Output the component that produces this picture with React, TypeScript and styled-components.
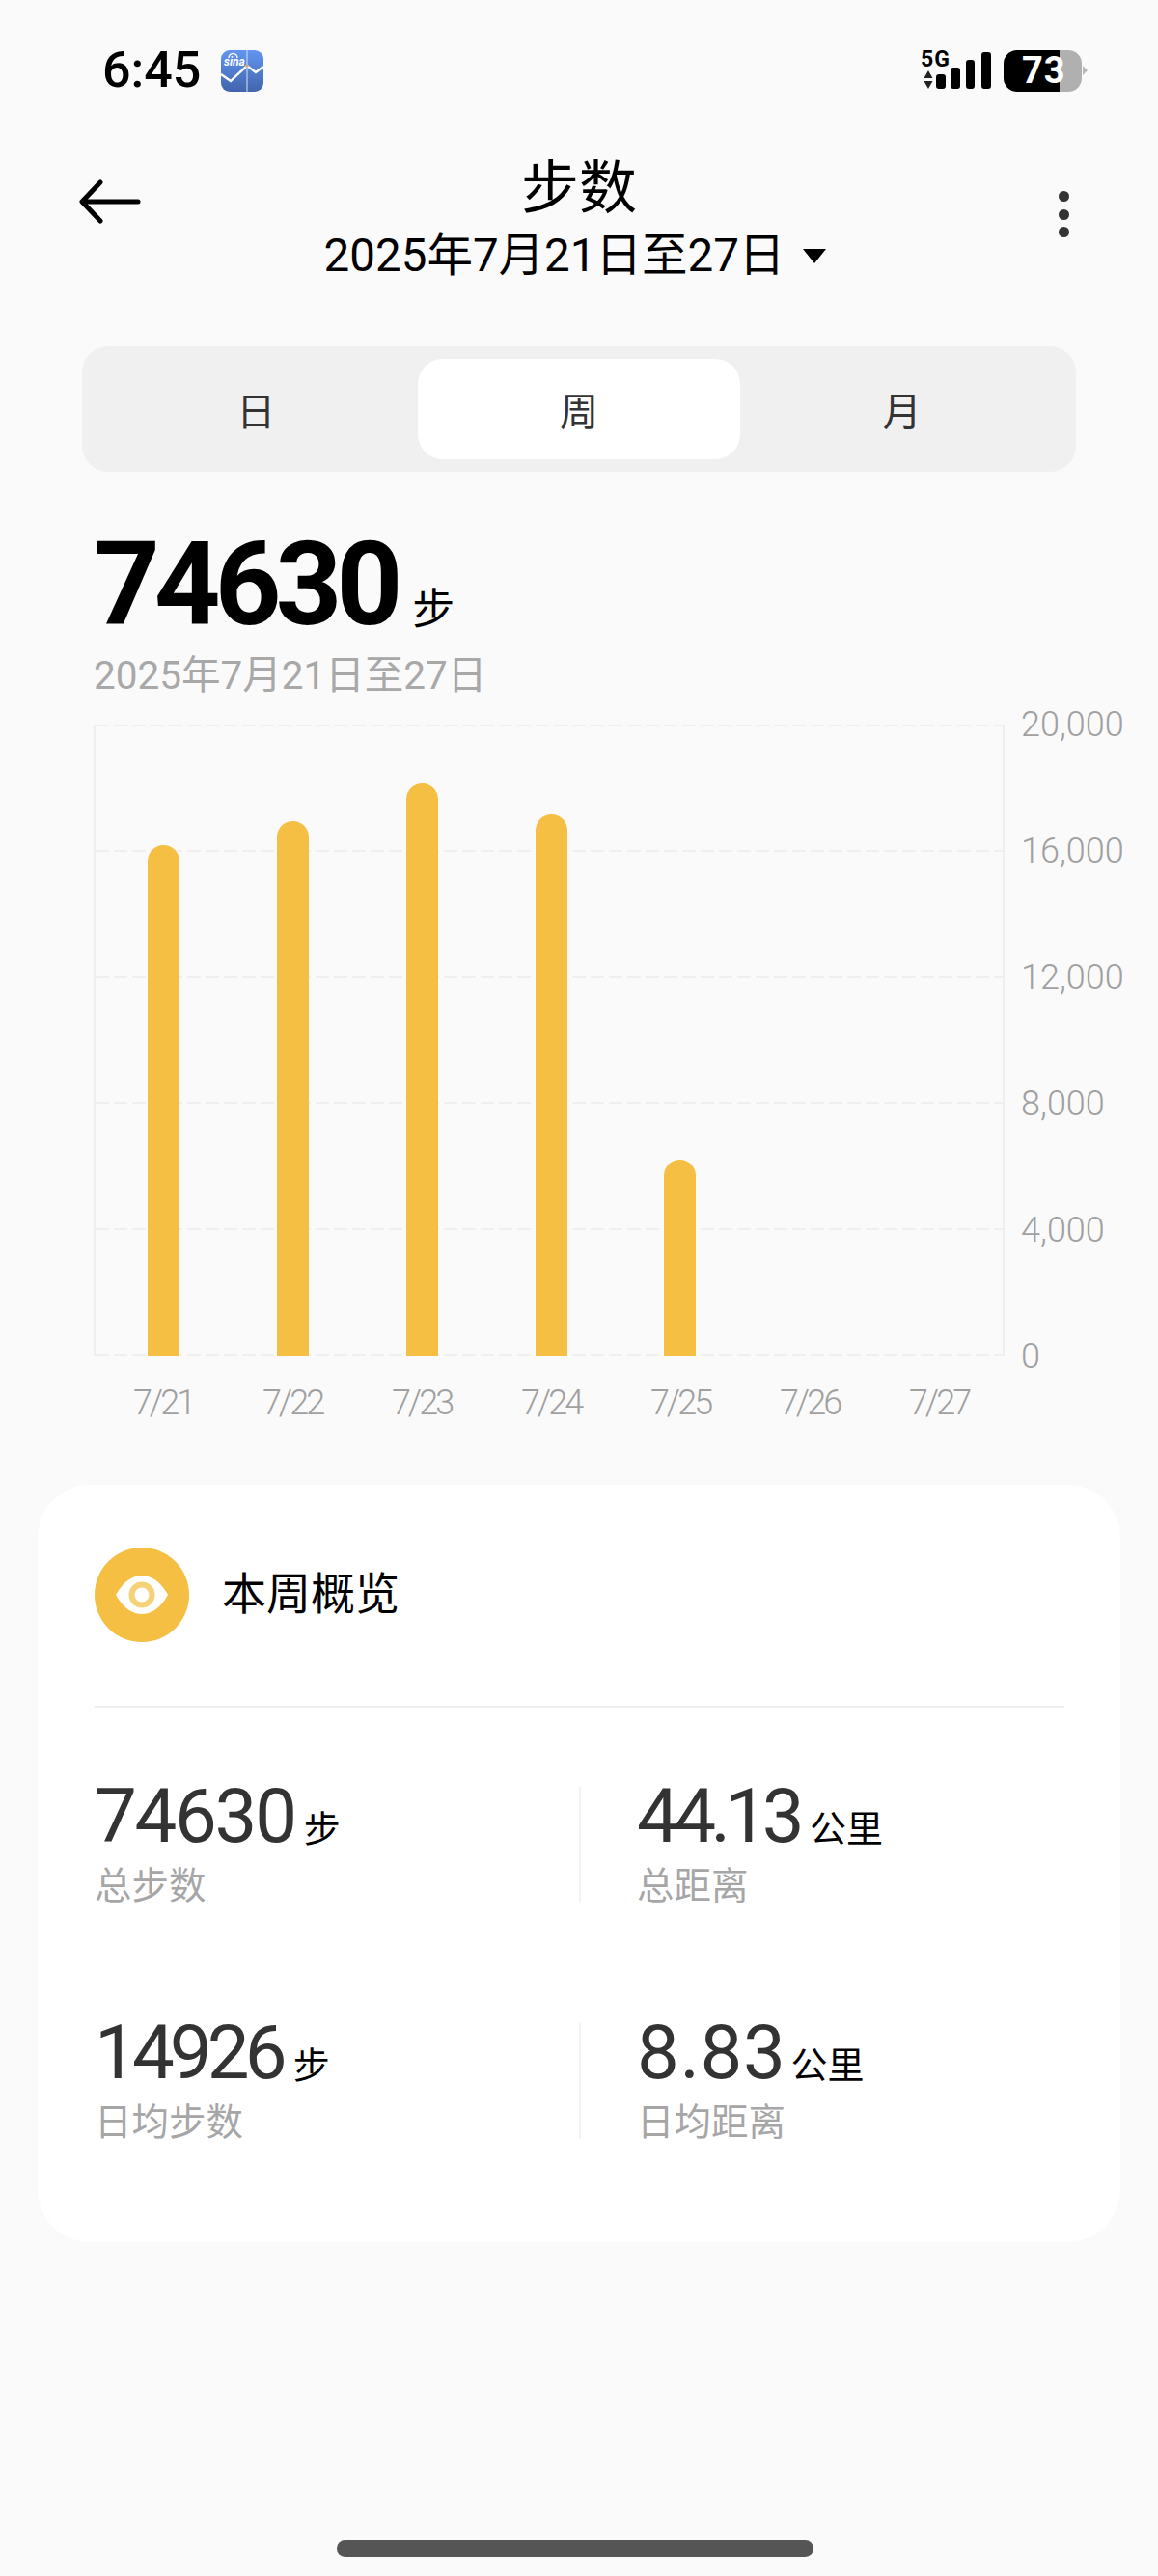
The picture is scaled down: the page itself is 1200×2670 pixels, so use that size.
import React from "react";
import styled, { createGlobalStyle } from "styled-components";

const FONT = `Roboto, "Noto Sans CJK SC", sans-serif`;
const YELLOW = "#f4bf42";
const BAR_MAX = 20000;
const PLOT_HEIGHT = 654;

const GlobalStyle = createGlobalStyle`
  html, body { margin: 0; padding: 0; background: #fafafa; }
  * { box-sizing: border-box; }
`;

const Page = styled.div`
  width: 1200px;
  height: 2670px;
  background: #fafafa;
  font-family: ${FONT};
  display: flex;
  flex-direction: column;
  overflow: hidden;
`;

const StatusBar = styled.div`
  height: 146px;
  padding: 51px 73px 0 106px;
  display: flex;
  align-items: flex-start;
  justify-content: space-between;
`;

const StatusLeft = styled.div`
  display: flex;
  align-items: center;
  gap: 21px;
  height: 44px;
`;

const Time = styled.span`
  font-size: 52px;
  font-weight: 500;
  color: #000;
  line-height: 44px;
`;

const StatusRight = styled.div`
  display: flex;
  align-items: flex-start;
  height: 44px;
`;

const NetColumn = styled.div`
  width: 16px;
  display: flex;
  flex-direction: column;
  align-items: flex-start;
  margin-top: 2px;

  svg {
    margin: 2px 0 0 3px;
  }
`;

const FiveG = styled.span`
  font-size: 23px;
  font-weight: 700;
  line-height: 18px;
  color: #000;
  letter-spacing: 1px;
`;

const SignalSlot = styled.div`
  margin-top: 3px;
  height: 38px;
`;

const Battery = styled.div`
  width: 81px;
  height: 43px;
  margin: 1px 0 0 12px;
  border-radius: 14px;
  background: linear-gradient(to right, #000 0 58px, #b0b0b0 58px);
  color: #fff;
  font-size: 38px;
  font-weight: 700;
  line-height: 43px;
  padding-left: 19px;
  letter-spacing: 1px;
`;

const BatteryNub = styled.div`
  width: 0;
  height: 0;
  margin: 17px 0 0 1px;
  border-left: 5px solid #b8b8b8;
  border-top: 5px solid transparent;
  border-bottom: 5px solid transparent;
`;

const Header = styled.div`
  height: 213px;
  padding: 0 85px;
  display: grid;
  grid-template-columns: 1fr auto 1fr;
`;

const BackCell = styled.div`
  padding-top: 40px;
  margin-left: -4px;
`;

const TitleBlock = styled.div`
  display: flex;
  flex-direction: column;
  align-items: center;
`;

const Title = styled.div`
  font-size: 60px;
  line-height: 70px;
  color: #000;
  margin-top: 15px;
`;

const DateRow = styled.div`
  display: flex;
  align-items: center;
  gap: 19px;
  font-size: 47.5px;
  line-height: 62px;
  color: #000;
  margin-top: 3px;
  margin-left: -8px;
`;

const Caret = styled.span`
  width: 0;
  height: 0;
  border-left: 12px solid transparent;
  border-right: 12px solid transparent;
  border-top: 15px solid #000;
`;

const MoreCell = styled.div`
  display: flex;
  flex-direction: column;
  align-items: flex-end;
  gap: 7.5px;
  padding: 52px 7px 0 0;
`;

const Dot = styled.span`
  width: 11px;
  height: 11px;
  border-radius: 50%;
  background: #333;
`;

const Tabs = styled.div`
  margin: 0 85px;
  height: 130px;
  padding: 13px;
  border-radius: 27px;
  background: #f0f0f0;
  display: grid;
  grid-template-columns: repeat(3, 1fr);
`;

const Tab = styled.div<{ $active?: boolean }>`
  border-radius: 26px;
  background: ${(p) => (p.$active ? "#fff" : "transparent")};
  color: #333;
  font-size: 40px;
  display: flex;
  align-items: center;
  justify-content: center;
`;

const Total = styled.div`
  margin: 62px 0 0 97px;
  display: flex;
  align-items: baseline;
  height: 110px;
`;

const TotalNumber = styled.span`
  font-size: 120px;
  font-weight: 700;
  line-height: 110px;
  color: #000;
  letter-spacing: -6px;
`;

const TotalUnit = styled.span`
  font-size: 44px;
  color: #000;
  margin-left: 16px;
`;

const RangeText = styled.div`
  margin: 14px 0 0 97px;
  font-size: 40.5px;
  line-height: 50px;
  color: #a8a8a8;
`;

const ChartWrap = styled.div`
  margin: 26px 0 0 97px;
  display: grid;
  grid-template-columns: 944px auto;
  column-gap: 17px;
`;

const Plot = styled.div`
  position: relative;
  height: ${PLOT_HEIGHT}px;
  border-left: 2px solid #efefef;
  border-right: 2px solid #efefef;
`;

const GridLines = styled.div`
  position: absolute;
  inset: 0;
  display: flex;
  flex-direction: column;
  justify-content: space-between;
`;

const GridLine = styled.div`
  height: 2px;
  background: repeating-linear-gradient(to right, #efefef 0 14px, transparent 14px 19px);
`;

const Bars = styled.div`
  position: absolute;
  inset: 0;
  padding-left: 4px;
  display: flex;
  align-items: flex-end;
`;

const BarSlot = styled.div`
  width: 134.4px;
  display: flex;
  justify-content: center;
`;

const Bar = styled.div`
  width: 33px;
  background: ${YELLOW};
  border-radius: 16.5px 16.5px 0 0;
`;

const YAxis = styled.div`
  height: 661px;
  margin-top: -3px;
  display: flex;
  flex-direction: column;
  justify-content: space-between;
`;

const AxisText = styled.span`
  font-size: 36px;
  font-weight: 300;
  line-height: 6px;
  color: #a0a0a0;
`;

const XAxis = styled.div`
  margin: 30px 0 0 102px;
  display: flex;
`;

const XLabel = styled.div`
  width: 134px;
  text-align: center;
  font-size: 36px;
  font-weight: 300;
  line-height: 30px;
  color: #a0a0a0;
  letter-spacing: -3px;
`;

const Card = styled.div`
  margin: 70px 39px 0;
  height: 785px;
  padding: 65px 58px 0 59px;
  border-radius: 55px;
  background: #fff;
`;

const CardHead = styled.div`
  display: flex;
  align-items: center;
  gap: 34px;
  height: 98px;
`;

const EyeBadge = styled.div`
  width: 98px;
  height: 98px;
  border-radius: 50%;
  background: ${YELLOW};
  display: flex;
  align-items: center;
  justify-content: center;
`;

const CardTitle = styled.div`
  font-size: 46px;
  line-height: 60px;
  margin-top: -2px;
  color: #000;
`;

const Rule = styled.div`
  height: 2px;
  margin-top: 66px;
  background: #eeeeee;
`;

const StatGrid = styled.div`
  margin-top: 82px;
  display: grid;
  grid-template-columns: 502px 1fr;
  row-gap: 125px;
`;

const Stat = styled.div<{ $split?: boolean }>`
  height: 120px;
  ${(p) => (p.$split ? "border-left: 2px solid #f4f4f4; padding-left: 58px;" : "")}
`;

const StatValue = styled.div`
  display: flex;
  align-items: baseline;
  height: 62px;
`;

const StatNumber = styled.span<{ $spacing: number }>`
  font-size: 78px;
  line-height: 62px;
  color: #333;
  letter-spacing: ${(p) => p.$spacing}px;
`;

const StatUnit = styled.span<{ $gap: number }>`
  font-size: 38px;
  color: #000;
  margin-left: ${(p) => p.$gap}px;
`;

const StatLabel = styled.div`
  margin-top: 19px;
  font-size: 38.5px;
  line-height: 44px;
  color: #a6a6a6;
`;

const HomeBar = styled.div`
  width: 494px;
  height: 17px;
  margin: auto auto 20px 349px;
  border-radius: 9px;
  background: #555;
`;

const SinaIcon = () => (
  <svg width="44" height="43" viewBox="0 0 44 43">
    <defs>
      <linearGradient id="sinaFill" x1="0" y1="0" x2="0" y2="1">
        <stop offset="0" stopColor="#6295f0" />
        <stop offset="1" stopColor="#4265ad" />
      </linearGradient>
    </defs>
    <rect width="44" height="43" rx="9" fill="url(#sinaFill)" />
    <path d="M0 25l10 7 17-16 9 7 8-6" fill="none" stroke="#fff" strokeWidth="2.4" />
    <path d="M27 0v43" stroke="#d9e4f7" strokeWidth="1" />
    <circle cx="27" cy="16" r="1.8" fill="#c9a98c" />
    <path d="M8 8a4.5 4.5 0 0 1 9 0" fill="none" stroke="#fff" strokeWidth="1.4" />
    <text x="3" y="16" fontSize="12" fontStyle="italic" fontWeight="700" fill="#fff" fontFamily="Roboto, sans-serif">
      sina
    </text>
  </svg>
);

const SignalIcon = () => (
  <svg width="58" height="38" viewBox="0 0 58 38">
    <rect x="0" y="23" width="10" height="15" rx="3" fill="#000" />
    <rect x="15" y="16" width="10" height="22" rx="3" fill="#000" />
    <rect x="31" y="8" width="9" height="30" rx="3" fill="#000" />
    <rect x="47" y="0" width="10" height="38" rx="3" fill="#000" />
  </svg>
);

const ArrowsIcon = () => (
  <svg width="10" height="19" viewBox="0 0 10 19">
    <path d="M5 0l4.5 8h-9zM5 19L.5 11h9z" fill="#222" />
  </svg>
);

const BackArrow = () => (
  <svg width="66" height="46" viewBox="0 0 66 46">
    <path d="M62 23H5M23 3L4 23l19 20" fill="none" stroke="#000" strokeWidth="5" strokeLinecap="round" strokeLinejoin="round" />
  </svg>
);

const EyeIcon = () => (
  <svg width="56" height="42" viewBox="0 0 56 42">
    <path d="M1 21C9 7 18 1 28 1s19 6 27 20c-8 14-17 20-27 20S9 35 1 21z" fill="#fff" />
    <circle cx="28" cy="21" r="10.5" fill="none" stroke="#f5d178" strokeWidth="6" />
  </svg>
);

const steps = [16180, 16950, 18130, 17150, 6220, 0, 0];
const days = ["7/21", "7/22", "7/23", "7/24", "7/25", "7/26", "7/27"];
const ticks = ["20,000", "16,000", "12,000", "8,000", "4,000", "0"];
const stats = [
  { value: "74630", unit: "步", label: "总步数", spacing: -2.3, gap: 9 },
  { value: "44.13", unit: "公里", label: "总距离", spacing: -5.6, gap: 11, split: true },
  { value: "14926", unit: "步", label: "日均步数", spacing: -4.9, gap: 11 },
  { value: "8.83", unit: "公里", label: "日均距离", spacing: 0.6, gap: 5, split: true },
];

export default function App() {
  return (
    <Page>
      <GlobalStyle />
      <StatusBar>
        <StatusLeft>
          <Time>6:45</Time>
          <SinaIcon />
        </StatusLeft>
        <StatusRight>
          <NetColumn>
            <FiveG>5G</FiveG>
            <ArrowsIcon />
          </NetColumn>
          <SignalSlot>
            <SignalIcon />
          </SignalSlot>
          <Battery>73</Battery>
          <BatteryNub />
        </StatusRight>
      </StatusBar>

      <Header>
        <BackCell>
          <BackArrow />
        </BackCell>
        <TitleBlock>
          <Title>步数</Title>
          <DateRow>
            2025年7月21日至27日
            <Caret />
          </DateRow>
        </TitleBlock>
        <MoreCell>
          <Dot />
          <Dot />
          <Dot />
        </MoreCell>
      </Header>

      <Tabs>
        <Tab>日</Tab>
        <Tab $active>周</Tab>
        <Tab>月</Tab>
      </Tabs>

      <Total>
        <TotalNumber>74630</TotalNumber>
        <TotalUnit>步</TotalUnit>
      </Total>
      <RangeText>2025年7月21日至27日</RangeText>

      <ChartWrap>
        <Plot>
          <GridLines>
            {ticks.map((t) => (
              <GridLine key={t} />
            ))}
          </GridLines>
          <Bars>
            {steps.map((s, i) => (
              <BarSlot key={days[i]}>
                {s > 0 && <Bar style={{ height: (s / BAR_MAX) * PLOT_HEIGHT }} />}
              </BarSlot>
            ))}
          </Bars>
        </Plot>
        <YAxis>
          {ticks.map((t) => (
            <AxisText key={t}>{t}</AxisText>
          ))}
        </YAxis>
      </ChartWrap>
      <XAxis>
        {days.map((d) => (
          <XLabel key={d}>{d}</XLabel>
        ))}
      </XAxis>

      <Card>
        <CardHead>
          <EyeBadge>
            <EyeIcon />
          </EyeBadge>
          <CardTitle>本周概览</CardTitle>
        </CardHead>
        <Rule />
        <StatGrid>
          {stats.map((s) => (
            <Stat key={s.label} $split={s.split}>
              <StatValue>
                <StatNumber $spacing={s.spacing}>{s.value}</StatNumber>
                <StatUnit $gap={s.gap}>{s.unit}</StatUnit>
              </StatValue>
              <StatLabel>{s.label}</StatLabel>
            </Stat>
          ))}
        </StatGrid>
      </Card>

      <HomeBar />
    </Page>
  );
}
